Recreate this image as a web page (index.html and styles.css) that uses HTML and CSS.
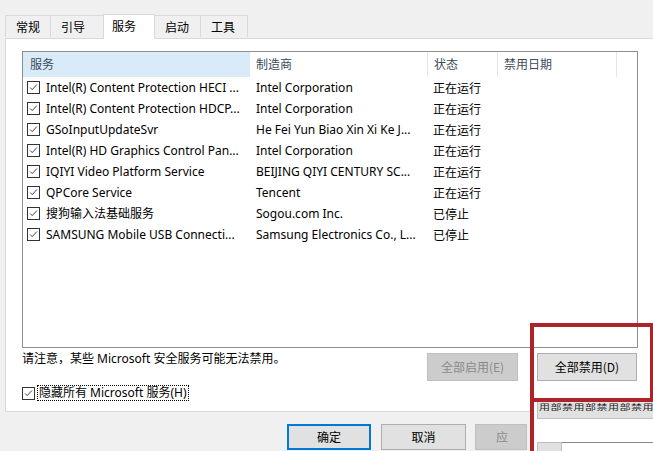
FILE: index.html
```html
<!DOCTYPE html>
<html>
<head>
<meta charset="utf-8">
<link rel="stylesheet" href="styles.css">
</head>
<body>
<div class="tabs">
  <div class="tab t1">常规</div>
  <div class="tab t2">引导</div>
  <div class="tab t3 active">服务</div>
  <div class="tab t4">启动</div>
  <div class="tab t5">工具</div>
</div>
<div class="panel">
  <div class="listbox">
    <div class="hdr">
      <div class="c1 hover">服务</div>
      <div class="c2">制造商</div>
      <div class="c3">状态</div>
      <div class="c4">禁用日期</div>
      <div class="c5"></div>
    </div>
    <div class="row"><div class="c1"><span class="cb"><svg viewBox="0 0 13 13"><path d="M2.5 6.5 L5 9 L10.5 3"/></svg></span><span class="txt">Intel(R) Content Protection HECI ...</span></div><div class="c2">Intel Corporation</div><div class="c3">正在运行</div></div>
    <div class="row"><div class="c1"><span class="cb"><svg viewBox="0 0 13 13"><path d="M2.5 6.5 L5 9 L10.5 3"/></svg></span><span class="txt">Intel(R) Content Protection HDCP...</span></div><div class="c2">Intel Corporation</div><div class="c3">正在运行</div></div>
    <div class="row"><div class="c1"><span class="cb"><svg viewBox="0 0 13 13"><path d="M2.5 6.5 L5 9 L10.5 3"/></svg></span><span class="txt">GSoInputUpdateSvr</span></div><div class="c2">He Fei Yun Biao Xin Xi Ke J...</div><div class="c3">正在运行</div></div>
    <div class="row"><div class="c1"><span class="cb"><svg viewBox="0 0 13 13"><path d="M2.5 6.5 L5 9 L10.5 3"/></svg></span><span class="txt">Intel(R) HD Graphics Control Pan...</span></div><div class="c2">Intel Corporation</div><div class="c3">正在运行</div></div>
    <div class="row"><div class="c1"><span class="cb"><svg viewBox="0 0 13 13"><path d="M2.5 6.5 L5 9 L10.5 3"/></svg></span><span class="txt">IQIYI Video Platform Service</span></div><div class="c2">BEIJING QIYI CENTURY SC...</div><div class="c3">正在运行</div></div>
    <div class="row"><div class="c1"><span class="cb"><svg viewBox="0 0 13 13"><path d="M2.5 6.5 L5 9 L10.5 3"/></svg></span><span class="txt">QPCore Service</span></div><div class="c2">Tencent</div><div class="c3">正在运行</div></div>
    <div class="row"><div class="c1"><span class="cb"><svg viewBox="0 0 13 13"><path d="M2.5 6.5 L5 9 L10.5 3"/></svg></span><span class="txt">搜狗输入法基础服务</span></div><div class="c2">Sogou.com Inc.</div><div class="c3">已停止</div></div>
    <div class="row"><div class="c1"><span class="cb"><svg viewBox="0 0 13 13"><path d="M2.5 6.5 L5 9 L10.5 3"/></svg></span><span class="txt">SAMSUNG Mobile USB Connecti...</span></div><div class="c2">Samsung Electronics Co., L...</div><div class="c3">已停止</div></div>
  </div>
  <div class="note-row">
    <div class="note">请注意，某些 Microsoft 安全服务可能无法禁用。</div>
    <div class="btns">
      <div class="btn disabled wide1">全部启用(E)</div>
      <div class="btn wide2">全部禁用(D)</div>
    </div>
  </div>
  <div class="hide-row">
    <span class="cb"><svg viewBox="0 0 13 13"><path d="M2.5 6.5 L5 9 L10.5 3"/></svg></span><span class="focus">隐藏所有 Microsoft 服务(H)</span>
  </div>
</div>
<div class="footer">
  <div class="btn fbtn default">确定</div>
  <div class="btn fbtn">取消</div>
  <div class="btn fbtn disabled apply">应</div>
</div>
<div class="highlight"></div>
<div class="glitch">
  <div class="g-band"><span>用部禁用部禁用部禁用</span></div>
  <div class="g-line"></div>
  <div class="g-bottom"><div class="g-box"></div><div class="g-box2"></div></div>
</div>
</body>
</html>
```

FILE: styles.css
```css
* { box-sizing: border-box; }
html, body {
  margin: 0;
  padding: 0;
}
body {
  width: 653px;
  height: 451px;
  overflow: hidden;
  background: #f0f0f0;
  font-family: "Noto Sans", "Noto Sans CJK SC", sans-serif;
  font-size: 12px;
  color: #000;
  position: relative;
}
.tabs {
  display: flex;
  align-items: flex-end;
  height: 38px;
  padding-left: 5px;
}
.tab {
  height: 22px;
  border: 1px solid #d9d9d9;
  border-bottom: none;
  margin-left: -1px;
  background: #f0f0f0;
  padding-left: 10px;
  line-height: 21px;
  font-family: "Noto Sans CJK SC", sans-serif;
  font-size: 12px;
  margin-bottom: 1px;
}
.tab:first-child { margin-left: 0; }
.t1 { width: 46px; }
.t2 { width: 54px; }
.t3 { width: 52px; }
.t4 { width: 47px; }
.t5 { width: 48px; }
.tab.active {
  height: 25px;
  background: #fff;
  margin-bottom: -1px;
  position: relative;
  z-index: 1;
  line-height: 22px;
  padding-left: 8px;
}
.panel {
  margin-left: 5px;
  height: 374px;
  background: #fff;
  border: 1px solid #d9d9d9;
  border-right: none;
  padding: 12px 16px 0 16px;
}
.listbox {
  width: 616px;
  height: 297px;
  border: 1px solid #8f8f8f;
  background: #fff;
}
.hdr {
  display: flex;
  height: 25px;
  font-family: "Noto Sans CJK SC", sans-serif;
  color: #3d4a5a;
}
.hdr > div {
  border-right: 1px solid #e5e5e5;
  line-height: 24px;
  padding-left: 6px;
}
.hdr .c1 { padding-left: 7px; }
.hdr .hover { background: #d9ebf9; border-right-color: #d9ebf9; }
.hdr .c5 { border-right: none; flex: 1; }
.c1 { width: 227px; }
.c2 { width: 178px; }
.c3 { width: 70px; }
.c4 { width: 119px; }
.row {
  display: flex;
  height: 21px;
  line-height: 21px;
  white-space: nowrap;
}
.row .c1 {
  display: flex;
  align-items: center;
  padding-left: 4px;
}
.row .c2 { padding-left: 6px; }
.row .c3 { padding-left: 5px; font-family: "Noto Sans CJK SC", sans-serif; }
.cb {
  width: 13px;
  height: 13px;
  border: 1px solid #333;
  display: inline-block;
  flex: none;
  background: #fff;
}
.cb svg {
  display: block;
  width: 11px;
  height: 11px;
}
.cb path {
  fill: none;
  stroke: #333;
  stroke-width: 1.1;
}
.txt { margin-left: 6px; }
.note-row {
  display: flex;
  justify-content: space-between;
  align-items: flex-start;
  height: 37px;
}
.note {
  margin-top: 3px;
  line-height: 16px;
}
.btns {
  display: flex;
  gap: 19px;
  margin-top: 5px;
}
.btn {
  height: 28px;
  line-height: 26px;
  text-align: center;
  background: #e1e1e1;
  border: 1px solid #adadad;
  font-family: "Noto Sans CJK SC", sans-serif;
}
.btn.disabled {
  background: #cccccc;
  border-color: #bfbfbf;
  color: #8a8a8a;
}
.wide1 { width: 91px; }
.wide2 { width: 100px; }
.hide-row {
  display: flex;
  align-items: center;
  height: 16px;
}
.focus {
  margin-left: 2px;
  border: 1px dotted #000;
  line-height: 14px;
  padding: 0 1px;
}
.footer {
  display: flex;
  gap: 10px;
  padding-left: 287px;
  padding-top: 12px;
}
.fbtn {
  width: 85px;
  height: 26px;
  line-height: 24px;
}
.fbtn.default {
  width: 84px;
  border: 2px solid #0078d7;
  line-height: 22px;
}
.fbtn.apply {
  width: 52px;
  text-align: left;
  padding-left: 20px;
  margin-left: -1px;
}
.highlight {
  position: absolute;
  left: 530px;
  top: 323px;
  width: 124px;
  height: 79px;
  border: 4px solid #ae2329;
}
.glitch {
  position: absolute;
  left: 530px;
  top: 402px;
  width: 124px;
  height: 49px;
  background: #fff;
  border-left: 4px solid #ae2329;
}
.g-band {
  margin-left: 3px;
  height: 17px;
  background: #e1e1e1;
  border: 1px solid #c0c0c0;
  border-top: none;
  position: relative;
}
.g-band span {
  position: absolute;
  top: 1px;
  left: 1px;
  white-space: nowrap;
  font-family: "Noto Sans CJK SC", sans-serif;
  font-size: 11px;
  line-height: 11px;
  letter-spacing: 0.5px;
  color: #222;
  transform: scaleY(0.7);
  transform-origin: top left;
}
.g-line {
  height: 23px;
}
.g-bottom {
  display: flex;
  margin-left: 3px;
}
.g-box {
  width: 25px;
  height: 9px;
  background: #e1e1e1;
  border: 1px solid #bdbdbd;
  border-bottom: none;
}
.g-box2 {
  flex: 1;
  height: 9px;
  border-top: 1px solid #888;
}
```
